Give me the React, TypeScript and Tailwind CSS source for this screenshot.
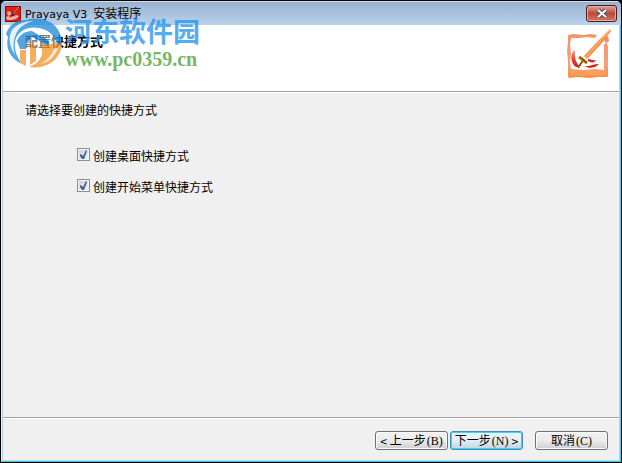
import { useState } from 'react';
import type { ReactNode } from 'react';

function AppIcon() {
  return (
    <svg className="size-4 shrink-0" viewBox="0 0 16 16" aria-hidden="true">
      <rect width="16" height="16" fill="#8f0c0a" />
      <rect x="1" y="1" width="14" height="14" fill="#dd1f18" />
      <path d="M2 6l3-1 2 2-1 2-3 1z" fill="#f0a79c" />
      <path d="M1 11l3-1 2 1 5-2 3 1-3 3-5 1H2z" fill="#eeb3a6" />
      <path d="M15 0L8 7 5 5l2 3-3 4 4-3 2 2-1-3 6-7z" fill="#4d130b" />
      <path d="M14 1L8 8" stroke="#f3a35e" strokeWidth="1" />
    </svg>
  );
}

function ProductLogo() {
  return (
    <svg className="h-[50px] w-[45px] shrink-0" viewBox="0 0 45 50" aria-hidden="true">
      <defs>
        <linearGradient id="frame" x1="0" y1="0" x2="0" y2="1">
          <stop offset="0" stopColor="#f3936c" />
          <stop offset="0.7" stopColor="#f7a078" />
          <stop offset="1" stopColor="#f98a43" />
        </linearGradient>
        <linearGradient id="swoosh" x1="0" y1="0" x2="0" y2="1">
          <stop offset="0" stopColor="#ff8a62" />
          <stop offset="1" stopColor="#d8120e" />
        </linearGradient>
      </defs>
      <path fill="url(#frame)" d="M1 6l6-1 9 1 8-1 6 1-2 3-8-1-8 1-8 0-1 7 1 9-1 8 1 7 13 1 11-1 9 1V23l0-7 2-3 2 4v30l-1 1-9 0-9 1-11-1-9 1-1-2V32l-1-10 1-9z" />
      <path fill="#fba45d" d="M3 41h36v5l-7 1-8-1-9 1-12-1z" opacity=".7" />
      <path fill="#f08a6c" d="M36 10l5-3 1 5-3 2z" />
      <path fill="url(#swoosh)" d="M8 21c-5 4-4 10-2 14 2 3 4 4 6 2-3-4-5-9-4-16z" />
      <path fill="#d3231b" d="M21 30c3 0 5 2 8 1-1 3-5 3-8 1zM17 37c6 1 9-2 15-2-3 4-10 5-15 2z" />
      <path fill="#f98f46" d="M43 0L30 13 17 27l3 3 15-16L44 2z" />
      <path stroke="#ffc48e" strokeWidth="1" d="M43 1L19 28" />
      <path stroke="#b07a1c" strokeWidth="3" d="M12 28l8 6" />
      <path stroke="#a46a0b" strokeWidth="2" d="M17 30l-6 9" />
      <path stroke="#64420c" strokeWidth="1" d="M13 28l7 6M15 33l-4 5" />
    </svg>
  );
}

function Watermark() {
  return (
    <div className="pointer-events-none absolute top-[14px] left-[5px] flex opacity-80" aria-hidden="true">
      <svg className="h-[54px] w-[57px] shrink-0" viewBox="0 0 57 54">
        <circle cx="29" cy="28" r="22" fill="#fff" opacity=".6" />
        <path fill="#2790dc" d="M0 19C3 10 10 5 20 5 37 0 52 8 55 22c1 6 0 10-2 14-1-13-9-21-20-23-10-2-19 2-23 10-3 9 0 18 6 26C5 44-1 34 2 22z" />
        <path fill="#fff" opacity=".85" d="M6 15c6-7 13-9 22-9-9 2-15 6-18 13C7 26 7 33 9 40 3 31 2 22 6 15z" />
        <path fill="#2790dc" d="M11 26c2-6 8-10 15-10l17 10v5L26 22l-6 5v7h-6z" />
        <path fill="#f39a35" d="M14 35h6v16c-3-1-5-3-6-5z" />
        <path fill="#f39a35" d="M24 30h6v16l-6 4z" />
        <path fill="#f39a35" d="M34 31c6-2 14-3 22-2-1 14-14 26-33 23 10-4 14-10 13-18z" />
        <path fill="#fff" opacity=".8" d="M52 33c-3 8-9 14-17 16 7-5 11-9 13-15z" />
      </svg>
      <div className="ml-[2px] whitespace-nowrap">
        <div className="font-['Noto_Sans_CJK_SC',sans-serif] text-[27px] leading-8 font-bold text-[#2b98ec]">河东软件园</div>
        <div className="font-['Liberation_Serif',serif] text-xl leading-6 font-bold text-[#54a63f]">www.pc0359.cn</div>
      </div>
    </div>
  );
}

function Shortcut({ children }: { children: ReactNode }) {
  const [checked, setChecked] = useState(true);
  return (
    <label className="flex items-start gap-[3px] leading-4">
      <span className="grid size-[13px]">
        <input
          type="checkbox"
          checked={checked}
          onChange={(e) => setChecked(e.target.checked)}
          className="col-start-1 row-start-1 size-[13px] appearance-none border border-[#8e8f8f] bg-linear-to-br from-[#c9ced5] to-[#f6f6f6] outline -outline-offset-2 outline-[#f4f4f4]"
        />
        {checked && (
          <svg className="pointer-events-none col-start-1 row-start-1 size-[13px]" viewBox="0 0 13 13" aria-hidden="true">
            <path d="M3 6l2 1 1 1 3-6 1 1-3 8H5L3 8z" fill="#3f5ca4" />
          </svg>
        )}
      </span>
      {children}
    </label>
  );
}

function WizardButton({ children, primary = false }: { children: ReactNode; primary?: boolean }) {
  const tone = primary
    ? 'border-[#3c8fb8] from-[#edf5f9] via-[#e2eef4] to-[#bfd6e2] inset-ring-[#43d0f5]'
    : 'border-[#707070] from-[#f2f2f2] via-[#ebebeb] to-[#cfcfcf] inset-ring-[#fafafa]';
  return (
    <button
      type="button"
      className={`flex h-[19px] w-[73px] items-center justify-center gap-[3px] rounded-[3px] border bg-linear-to-b whitespace-pre inset-ring ${tone}`}
    >
      {children}
    </button>
  );
}

function Latin({ children }: { children: ReactNode }) {
  return <span className="pl-px font-['Liberation_Serif',serif]">{children}</span>;
}

export default function App() {
  return (
    <div className="h-screen bg-black">
      <div className="relative flex h-full flex-col overflow-hidden rounded-t-md border border-black bg-[#b9d1ea] font-['Noto_Sans_CJK_SC',sans-serif] text-xs text-black">
        <header className="flex h-6 shrink-0 items-center gap-1 border-t border-[#cfe0f0] bg-linear-to-b from-[#98b2d1] to-[#b9d1ea] px-1">
          <AppIcon />
          <h1 className="flex grow items-baseline gap-1.5 leading-4">
            <span className="font-['DejaVu_Sans',sans-serif] text-[11px]">Prayaya V3</span>
            <span>安装程序</span>
          </h1>
          <button
            type="button"
            aria-label="关闭"
            className="flex h-[17px] w-[31px] items-center justify-center rounded-[3px] border border-[#4b1d1f] bg-linear-to-b from-[#dfa097] via-[#b94b3c] to-[#cf7a63] inset-ring inset-ring-[#e2aca3]"
          >
            <svg className="h-[9px] w-[12px]" viewBox="0 0 12 9" aria-hidden="true">
              <path d="M2 1l8 7M10 1L2 8" stroke="#4d4f5d" strokeWidth="4" />
              <path d="M2 1l8 7M10 1L2 8" stroke="#fff" strokeWidth="2" />
            </svg>
          </button>
        </header>
        <div className="flex grow flex-col border-r border-b border-l border-r-[#41cdf0] border-b-[#41cdf0] border-l-[#e4f0fb]">
          <main className="flex grow flex-col border-x border-b border-[#b4d3f5] bg-[#f0f0f0]">
            <section className="flex h-[67px] shrink-0 items-start justify-between border-b border-[#a0a0a0] bg-white pr-[7px] pl-[22px]">
              <h2 className="pt-2 text-[13px] leading-4 font-bold">配置快捷方式</h2>
              <div className="pt-1"><ProductLogo /></div>
            </section>
            <section className="grow border-t border-white px-[22px] pt-[9px]">
              <p className="leading-4">请选择要创建的快捷方式</p>
              <div className="mt-[30px] ml-[52px] flex flex-col items-start gap-[15px]">
                <Shortcut>创建桌面快捷方式</Shortcut>
                <Shortcut>创建开始菜单快捷方式</Shortcut>
              </div>
            </section>
            <footer className="flex h-[43px] shrink-0 justify-end border-t border-[#a0a0a0] pt-[13px] pr-[11px] inset-shadow-[0_1px_0_#fff]">
              <div className="flex gap-[2px]">
                <WizardButton><span>&lt;</span><span>上一步<Latin>(B)</Latin></span></WizardButton>
                <WizardButton primary><span>下一步<Latin>(N)</Latin></span><span>&gt;</span></WizardButton>
              </div>
              <div className="ml-3"><WizardButton><span>取消<Latin>(C)</Latin></span></WizardButton></div>
            </footer>
          </main>
        </div>
        <Watermark />
      </div>
    </div>
  );
}
